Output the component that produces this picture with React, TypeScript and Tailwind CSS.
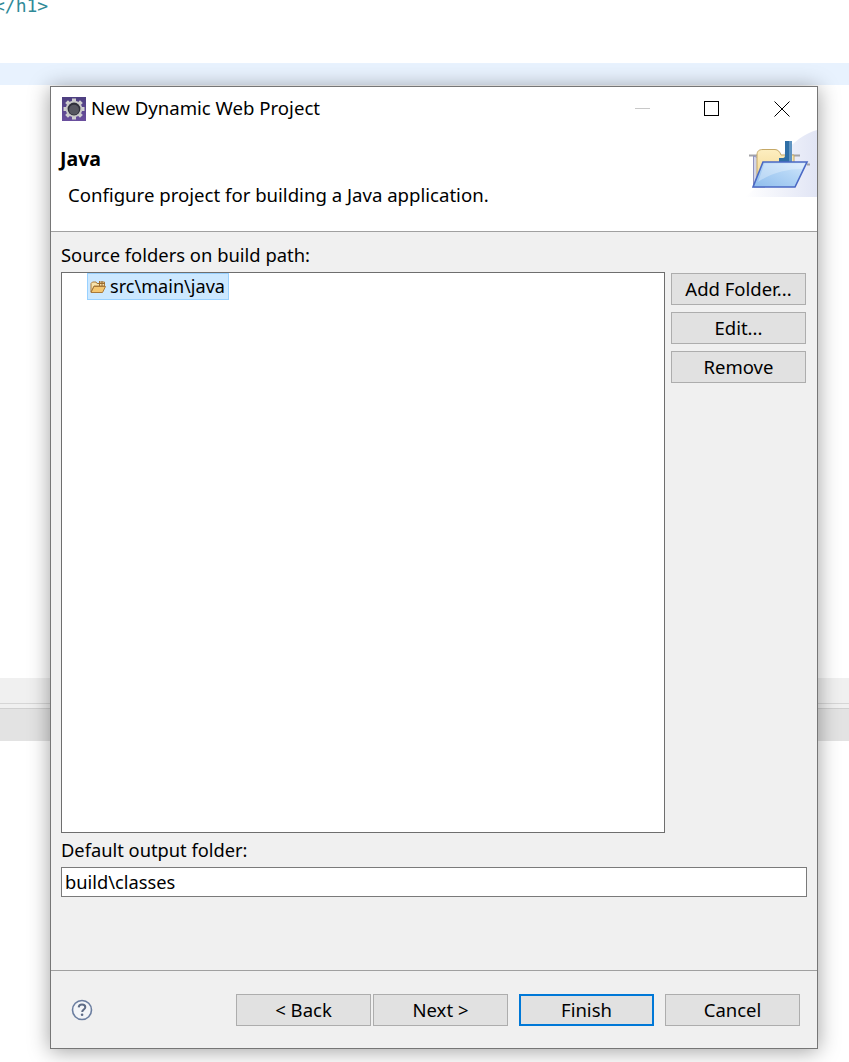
import React from "react";

function DialogButton({ label, focused, className }: { label: string; focused?: boolean; className?: string }) {
  return (
    <button
      className={
        "h-8 w-[135px] shrink-0 bg-[#e1e1e1] text-[18.5px] leading-none text-black " +
        (focused ? "border-2 border-[#0078d7] " : "border border-[#adadad] ") +
        (className ?? "")
      }
    >
      {label}
    </button>
  );
}

function EclipseIcon() {
  const teeth = [0, 45, 90, 135, 180, 225, 270, 315];
  return (
    <svg width="24" height="24" viewBox="0 0 24 24" className="shrink-0">
      <defs>
        <linearGradient id="ec" x1="0" y1="0" x2="0" y2="1">
          <stop offset="0" stopColor="#4d3f80" />
          <stop offset="1" stopColor="#6a4f9e" />
        </linearGradient>
      </defs>
      <rect width="24" height="24" fill="url(#ec)" />
      {teeth.map((a) => (
        <rect key={a} x="10" y="1.5" width="4" height="5" fill="#cfcfcf" transform={`rotate(${a} 12 12)`} />
      ))}
      <circle cx="12" cy="12" r="8.3" fill="#c8c8c8" />
      <circle cx="12" cy="12" r="6.4" fill="#2f2f3a" />
      <circle cx="12" cy="12.8" r="5" fill="#565660" />
    </svg>
  );
}

function BannerFolder() {
  return (
    <svg width="72" height="67" viewBox="0 0 72 67" className="block">
      <defs>
        <linearGradient id="bg1" x1="0" y1="0" x2="1" y2="0">
          <stop offset="0" stopColor="#ffffff" />
          <stop offset="1" stopColor="#e1e5f5" />
        </linearGradient>
        <linearGradient id="front" x1="0" y1="1" x2="1" y2="0">
          <stop offset="0" stopColor="#8fbdec" />
          <stop offset="0.6" stopColor="#b5d6f6" />
          <stop offset="1" stopColor="#d8eafc" />
        </linearGradient>
        <linearGradient id="back" x1="0" y1="0" x2="0" y2="1">
          <stop offset="0" stopColor="#fdeec0" />
          <stop offset="1" stopColor="#f2d68f" />
        </linearGradient>
      </defs>
      <path d="M0 67 C24 50 38 10 72 0 L72 67 Z" fill="url(#bg1)" />
      <path d="M4 25.5 H13 M47 25.5 H55 M15 34.5 H18 M62 34.5 H65" stroke="#a4a4a8" strokeWidth="2" fill="none" />
      <path d="M8.5 26 V57 H20 V30 Z" fill="#d4d5e6" stroke="#8f93c0" strokeWidth="1" />
      <path d="M12 52 V25 C12 21 14 19.5 18 19.5 H30 C33 19.5 35 22 36 25 H49 V34 H20 Z" fill="url(#back)" stroke="#c5a866" strokeWidth="1" />
      <path d="M40 25 V11 H47 V32 H34 V28 H38 C39.5 28 40 27 40 25 Z" fill="#2f6ea5" />
      <path d="M44 11 H47 V32 H44 Z" fill="#5f93c0" />
      <path d="M18 32 H62 L50 57 H8 Z" fill="url(#front)" stroke="#4a68c4" strokeWidth="1.6" />
      <path d="M19.5 33.5 H60 L57 39 C42 39 26 43 13 52 Z" fill="#ffffff" opacity="0.3" />
    </svg>
  );
}

function SmallFolder() {
  return (
    <svg width="16" height="14" viewBox="0 0 16 14" className="shrink-0">
      <path d="M1 12 V3.5 L2.5 2 H6 L7 3.5 H9.5 V2 H14.5 V6 H4 Z" fill="#f7e3ac" stroke="#a8793a" strokeWidth="1" />
      <path d="M9.5 1 V6 M12 1 V6 M8 3.5 H15" stroke="#9a6b30" strokeWidth="1" />
      <path d="M4 6.5 H15.5 L12.5 12.5 H1 Z" fill="#f4c670" stroke="#a8793a" strokeWidth="1" />
    </svg>
  );
}

export default function App() {
  return (
    <div className="relative h-[1062px] w-[849px] overflow-hidden bg-white font-['Noto_Sans','Open_Sans',sans-serif] text-black">
      {/* Editor behind the dialog */}
      <div className="flex h-full flex-col">
        <div className="h-[63px] overflow-hidden">
          <div className="ml-[-6px] mt-[-6px] font-['DejaVu_Sans_Mono',monospace] text-[18px] leading-[24px] text-[#2f8a98]">&lt;/h1&gt;</div>
        </div>
        <div className="h-[22px] bg-[#e8f2fe]" />
        <div className="h-[593px]" />
        <div className="h-[25px] bg-[#f0f0f0]" />
        <div className="h-px bg-[#d6d6d6]" />
        <div className="h-1 bg-[#f0f0f0]" />
        <div className="h-px bg-[#d0d0d0]" />
        <div className="h-8 bg-[#e3e3e3]" />
      </div>

      {/* Dialog */}
      <div className="absolute left-[50px] top-[86px] flex h-[963px] w-[768px] flex-col border border-[#767676] bg-[#f0f0f0] shadow-[0_2px_20px_rgba(0,0,0,0.38)]">
        <div className="h-[145px] shrink-0 border-b border-[#a0a0a0] bg-white">
          <div className="flex h-[43px] items-center pl-[11px]">
            <EclipseIcon />
            <span className="ml-[5px] text-[18.6px] leading-none">New Dynamic Web Project</span>
            <div className="ml-auto flex items-center">
              <div className="h-px w-[15px] bg-[#c8c8c8]" />
              <div className="ml-[54px] h-[15px] w-[15px] border border-black" />
              <svg width="16" height="16" viewBox="0 0 16 16" className="ml-[55px] mr-[27px]">
                <path d="M0.5 0.5 L15.5 15.5 M15.5 0.5 L0.5 15.5" stroke="#000" strokeWidth="1" />
              </svg>
            </div>
          </div>
          <div className="relative flex flex-col pl-[9px]">
            <span className="mt-[17px] text-[19.5px] font-bold leading-[24px]">Java</span>
            <span className="ml-2 mt-3 text-[18.6px] leading-[24px]">Configure project for building a Java application.</span>
            <div className="absolute right-0 top-0">
              <BannerFolder />
            </div>
          </div>
        </div>

        <div className="flex min-h-0 flex-1 flex-col pl-[10px] pr-[10px]">
          <div className="mt-[11px] text-[18.4px] leading-[24px]">Source folders on build path:</div>
          <div className="mt-[5px] flex gap-[6px]">
            <div className="h-[561px] w-[604px] border border-[#6e6e6e] bg-white pl-[25px]">
              <div className="flex h-[27px] w-[142px] items-center border border-[#99d1ff] bg-[#cce8ff] pl-[2px]">
                <SmallFolder />
                <span className="ml-1 text-[18.1px] leading-none">src\main\java</span>
              </div>
            </div>
            <div className="flex flex-col gap-[7px] pt-px">
              <DialogButton label="Add Folder..." />
              <DialogButton label="Edit..." />
              <DialogButton label="Remove" />
            </div>
          </div>
          <div className="mt-[5px] text-[18.3px] leading-[24px]">Default output folder:</div>
          <div className="mt-[5px] flex h-[30px] w-[746px] items-center border border-[#7a7a7a] bg-white pl-[3px] text-[18.3px] leading-none">
            build\classes
          </div>
        </div>

        <div className="h-[78px] shrink-0 border-t border-[#a0a0a0]">
          <div className="flex items-center pt-[23px]">
            <svg width="22" height="22" viewBox="0 0 22 22" className="ml-[20px]">
              <circle cx="11" cy="11" r="9.5" fill="#f3f5f8" stroke="#6b7ea0" strokeWidth="1.6" />
              <path d="M7.7 8.4 C7.8 6.4 9.2 5.5 11 5.5 C13 5.5 14.3 6.6 14.3 8.2 C14.3 10.5 11.2 10.6 11.2 13" fill="none" stroke="#5d6b85" strokeWidth="2" />
              <circle cx="11.1" cy="15.8" r="1.3" fill="#5d6b85" />
            </svg>
            <DialogButton label="< Back" className="ml-[143px]" />
            <DialogButton label="Next >" className="ml-[2px]" />
            <DialogButton label="Finish" focused className="ml-[11px]" />
            <DialogButton label="Cancel" className="ml-[11px]" />
          </div>
        </div>
      </div>
    </div>
  );
}
